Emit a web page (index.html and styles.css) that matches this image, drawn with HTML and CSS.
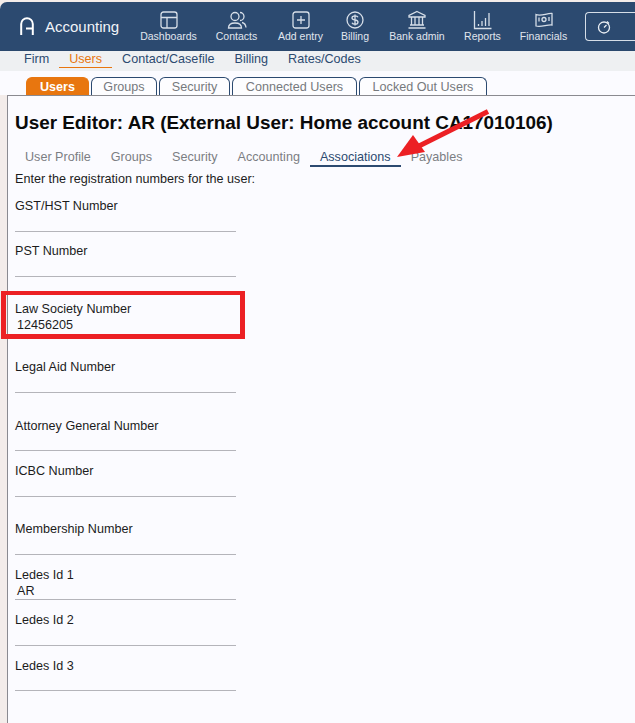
FILE: index.html
```html
<!DOCTYPE html>
<html lang="en">
<head>
<meta charset="utf-8">
<title>User Editor</title>
<link rel="stylesheet" href="styles.css">
</head>
<body>
<header class="topbar">
  <div class="brand">
    <svg class="logo" width="14" height="20" viewBox="0 0 14 20"><path d="M1.200 18V7a5.800 5.800 0 0 1 11.600 0v11" fill="none" stroke="#fff" stroke-width="2"/><path d="M6 11.500h6" stroke="#fff" stroke-width="2" fill="none"/></svg>
    <span>Accounting</span>
  </div>
  <nav class="mainnav">
    <a class="navitem nav-dash"><svg width="20" height="20" viewBox="0 0 20 20"><rect x="2" y="2" width="16" height="16" rx="2.500"/><path d="M2 7.500h16M8 7.500V18"/></svg>Dashboards</a>
    <a class="navitem nav-contacts"><svg width="20" height="20" viewBox="0 0 20 20"><circle cx="8" cy="6.500" r="4"/><path d="M1.500 18c0-3.500 2.500-5 6.500-5s6.500 1.500 6.500 5zM13 2.500a4 4 0 0 1 0 8M15 12.500c2.500.5 3.700 2 4 5"/></svg>Contacts</a>
    <a class="navitem nav-add"><svg width="20" height="20" viewBox="0 0 20 20"><rect x="2" y="2" width="16" height="16" rx="2.500"/><path d="M10 6v8M6 10h8"/></svg>Add entry</a>
    <a class="navitem nav-billing"><svg width="20" height="20" viewBox="0 0 20 20"><circle cx="10" cy="10" r="8"/><path d="M13 7.200C12.500 6 11.200 5.800 10 5.800 8.500 5.800 7 6.500 7 8s1.500 1.800 3 2 3 .6 3 2-1.500 2.200-3 2.200c-1.300 0-2.500-.4-3-1.500M10 4.500v11"/></svg>Billing</a>
    <a class="navitem nav-bank"><svg width="20" height="20" viewBox="0 0 20 20"><path d="M10 1.500 18 5.500v1.500H2V5.500zM4.500 7v8M8 7v8M12 7v8M15.500 7v8M3 15h14M1.500 18h17"/></svg>Bank admin</a>
    <a class="navitem nav-reports"><svg width="20" height="20" viewBox="0 0 20 20"><path d="M1.500 1v17.500h17M5.500 16v-2M9 16v-5M12.500 16V8M16 16V3"/></svg>Reports</a>
    <a class="navitem nav-fin"><svg width="20" height="20" viewBox="0 0 20 20"><path d="M2 4.500c5 2 11-1.500 16-1v11.500c-5-.5-11 2.500-16 1z"/><circle cx="10" cy="9.500" r="2"/><path d="M5 7.500v4M15 7v4"/></svg>Financials</a>
  </nav>
  <div class="timer"><svg width="14" height="14" viewBox="0 0 14 14"><circle cx="7" cy="7.500" r="5.500"/><path d="M7 7.500 9.500 5M10 1.500l2 2"/></svg></div>
</header>
<nav class="subnav">
  <a class="subitem">Firm</a>
  <a class="subitem active">Users</a>
  <a class="subitem">Contact/Casefile</a>
  <a class="subitem">Billing</a>
  <a class="subitem">Rates/Codes</a>
</nav>
<div class="tabs">
  <a class="tab current">Users</a>
  <a class="tab t-groups">Groups</a>
  <a class="tab t-security">Security</a>
  <a class="tab t-connected">Connected Users</a>
  <a class="tab t-locked">Locked Out Users</a>
</div>
<main class="panel">
  <h1>User Editor: AR (External User: Home account CA17010106)</h1>
  <div class="innertabs">
    <a class="inner">User Profile</a>
    <a class="inner">Groups</a>
    <a class="inner">Security</a>
    <a class="inner">Accounting</a>
    <a class="inner selected">Associations</a>
    <a class="inner">Payables</a>
  </div>
  <p class="intro">Enter the registration numbers for the user:</p>
  <div class="field first"><label>GST/HST Number</label><div class="value"></div></div>
  <div class="field short pst"><label>PST Number</label><div class="value"></div></div>
  <div class="field boxed"><label>Law Society Number</label><div class="value">12456205</div></div>
  <div class="field"><label>Legal Aid Number</label><div class="value"></div></div>
  <div class="field attorney"><label>Attorney General Number</label><div class="value"></div></div>
  <div class="field mid"><label>ICBC Number</label><div class="value"></div></div>
  <div class="field"><label>Membership Number</label><div class="value"></div></div>
  <div class="field short"><label>Ledes Id 1</label><div class="value">AR</div></div>
  <div class="field mid"><label>Ledes Id 2</label><div class="value"></div></div>
  <div class="field short"><label>Ledes Id 3</label><div class="value"></div></div>
</main>
<div class="highlight"></div>
<svg class="arrow" width="100" height="55" viewBox="0 0 100 55"><path d="M94 3.500 25 38" stroke="#ec2024" stroke-width="5" fill="none"/><path d="M3 49 19 27 31 44z" fill="#ec2024"/></svg>
</body>
</html>
```
FILE: styles.css
```css
* { box-sizing: border-box; }
html, body { margin: 0; padding: 0; }
body {
  position: relative;
  width: 635px;
  height: 723px;
  overflow: hidden;
  background: #f3ecea;
  font-family: "Liberation Sans", Arial, sans-serif;
  padding-top: 2px;
}
a { display: block; }

.topbar {
  height: 49px;
  background: #2c4a70;
  border-top-left-radius: 7px;
  display: flex;
  align-items: flex-start;
  color: #fff;
  overflow: hidden;
}
.brand {
  width: 138px;
  height: 49px;
  display: flex;
  align-items: center;
  padding: 0 0 0 20px;
  gap: 11px;
  font-size: 15px;
  color: #f1f4f8;
}
.mainnav { display: flex; }
.navitem {
  height: 49px;
  padding-top: 8px;
  display: flex;
  flex-direction: column;
  align-items: center;
  font-size: 10.500px;
  color: #e0e6ee;
  line-height: 12px;
  white-space: nowrap;
}
.navitem svg {
  display: block;
  fill: none;
  stroke: #d6dee8;
  stroke-width: 1.300;
}
.nav-dash { width: 61px; }
.nav-contacts { width: 45px; margin-left: 15px; }
.nav-add { width: 47px; margin-left: 18px; }
.nav-billing { width: 30px; margin-left: 16px; }
.nav-bank { width: 57px; margin-left: 18.500px; }
.nav-reports { width: 38px; margin-left: 18px; }
.nav-fin { width: 48px; margin-left: 18px; }
.timer {
  margin: 10px 0 0 17px;
  flex: 1;
  height: 29px;
  border: 1px solid #d6dee8;
  border-right: 0;
  border-radius: 4px 0 0 4px;
  padding: 7px 0 0 11px;
}
.timer svg { display: block; fill: none; stroke: #e8edf3; stroke-width: 1.300; }

.subnav {
  height: 20px;
  background: #eef0f2;
  box-shadow: 0 1px 2px rgba(0, 0, 0, .35);
  display: flex;
  padding-left: 14px;
  font-size: 12.600px;
  line-height: 15px;
  color: #2c4a70;
  position: relative;
}
.subitem { padding: 1px 10px 0; height: 17px; }
.subitem.active {
  color: #e8760f;
  border-bottom: 1px solid #e8760f;
}

.tabs {
  display: flex;
  padding-left: 26px;
  gap: 2px;
  font-size: 12.600px;
  position: relative;
  background: #fbfbff;
  height: 24px;
  padding-top: 6px;
}
.tab {
  height: 18px;
  border: 1px solid #2c4a70;
  border-bottom: 0;
  border-radius: 6px 6px 0 0;
  color: #76797d;
  background: #fdfdff;
  text-align: center;
  line-height: 18px;
}
.tab.current {
  width: 63px;
  border-color: #e8760f;
  background: #e8760f;
  color: #fff;
  font-weight: 700;
}
.t-groups { width: 66px; }
.t-security { width: 71px; }
.t-connected { width: 125px; }
.t-locked { width: 128px; }

.panel {
  margin-left: 7px;
  height: 640px;
  background: #fbfbff;
  border-top: 1px solid #8a8a90;
  border-left: 1px solid #8a8a90;
  padding: 0 0 0 7px;
  color: #1c1c1c;
}
h1 {
  margin: 0;
  padding-top: 16px;
  font-size: 18.900px;
  line-height: 21px;
  font-weight: 700;
  color: #0a0a0a;
  white-space: nowrap;
}
.innertabs {
  display: flex;
  margin-top: 13px;
  font-size: 12.600px;
  color: #7b7e83;
  line-height: 14px;
  height: 21px;
}
.inner { padding: 4px 10px 0; height: 21px; }
.inner.selected {
  color: #2c4a70;
  border-bottom: 2px solid #2c4a70;
}
.intro { margin: 0; font-size: 12.600px; line-height: 14px; padding-top: 5px; }
.field {
  width: 221px;
  padding-top: 25px;
  font-size: 12.600px;
  line-height: 14px;
  border-bottom: 1px solid #b4b4ba;
  height: 58px;
}
.field.short { height: 45px; padding-top: 13px; }
.field.mid { height: 46px; padding-top: 13px; }
.field.first { height: 46px; padding-top: 13px; }
.field.pst { padding-top: 12px; }
.field.attorney { padding-top: 26px; }
.field.boxed { border-bottom-color: transparent; }
label { display: block; }
.value { padding-left: 2px; height: 16px; padding-top: 2px; }

.highlight {
  position: absolute;
  left: 1px;
  top: 291px;
  width: 244px;
  height: 48px;
  border: 5px solid #ec2024;
  border-top-width: 4px;
}
.arrow {
  position: absolute;
  left: 394px;
  top: 108px;
}
```
